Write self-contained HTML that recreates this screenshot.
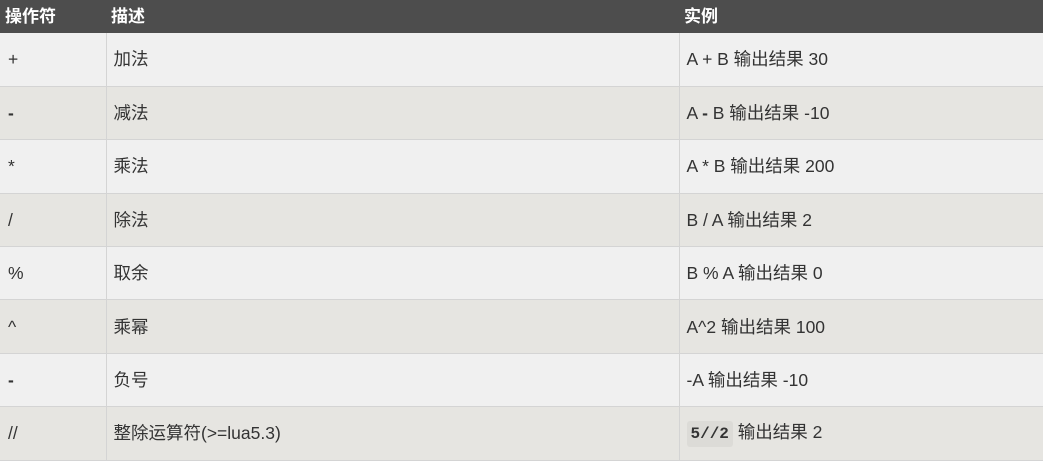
<!DOCTYPE html>
<html><head><meta charset="utf-8"><style>
body{margin:0;background:#fff;font-family:"Liberation Sans","Noto Sans CJK SC",sans-serif;}
table{border-collapse:collapse;width:1043px;table-layout:fixed;font-size:17.5px;color:#333;}
th{background:#4d4d4d;color:#fff;font-weight:bold;text-align:left;height:33px;padding:0 5px;font-size:17px;line-height:20px;vertical-align:middle;}
td{height:53.4px;padding:0 7px;border:1px solid #d4d4d4;border-top:none;line-height:22px;vertical-align:middle;box-sizing:border-box;}
tr:nth-child(odd) td{background:#f0f0f0;}
tr:nth-child(even) td{background:#e6e5e1;}
tr td:first-child{border-left:none;padding-left:8px}
tr td:last-child{border-right:none}
code{font-family:"Liberation Mono",monospace;font-weight:bold;background:#dcdbd7;padding:4px 4px;border-radius:3px;font-size:16px;}
</style></head><body>
<table>
<colgroup><col style="width:106px"><col style="width:573px"><col></colgroup>
<thead><tr><th>操作符</th><th>描述</th><th>实例</th></tr></thead>
<tbody>
<tr><td>+</td><td>加法</td><td>A + B 输出结果 30</td></tr>
<tr><td><b>-</b></td><td>减法</td><td>A <b>-</b> B 输出结果 -10</td></tr>
<tr><td>*</td><td>乘法</td><td>A * B 输出结果 200</td></tr>
<tr><td>/</td><td>除法</td><td>B / A 输出结果 2</td></tr>
<tr><td>%</td><td>取余</td><td>B % A 输出结果 0</td></tr>
<tr><td>^</td><td>乘幂</td><td>A^2 输出结果 100</td></tr>
<tr><td><b>-</b></td><td>负号</td><td>-A 输出结果 -10</td></tr>
<tr><td>//</td><td>整除运算符(&gt;=lua5.3)</td><td><code>5//2</code> 输出结果 2</td></tr>
</tbody></table>
</body></html>
